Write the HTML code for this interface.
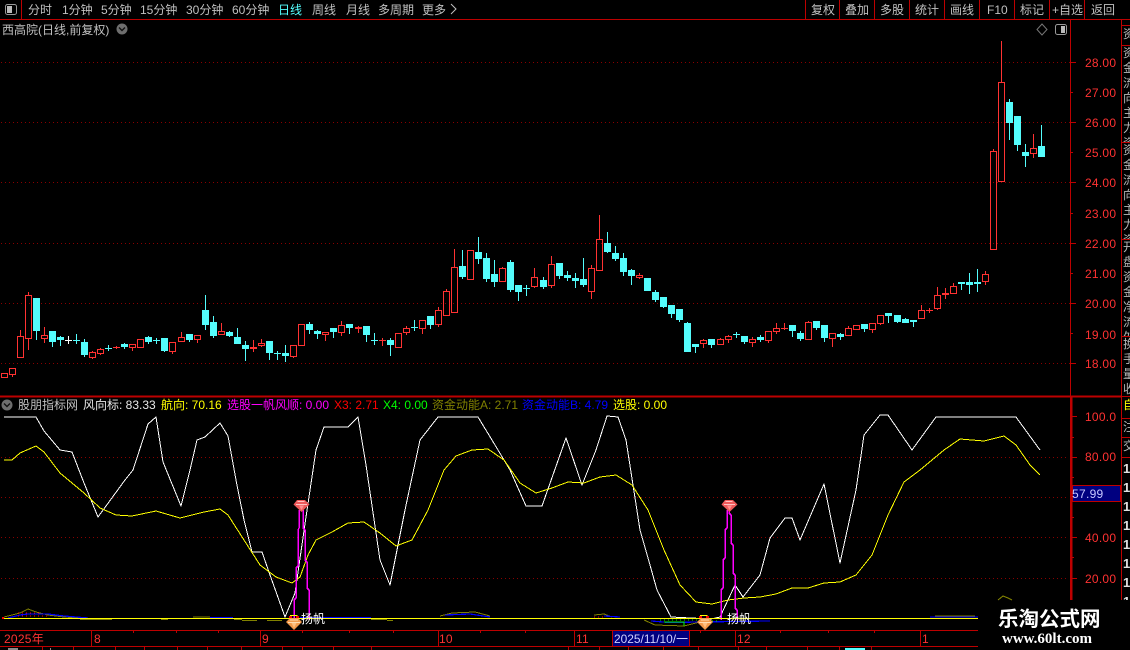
<!DOCTYPE html>
<html><head><meta charset="utf-8"><style>
html,body{margin:0;padding:0;background:#000;width:1130px;height:650px;overflow:hidden}
#w{position:relative;width:1130px;height:650px;background:#000;overflow:hidden;font-family:"Liberation Sans","WenQuanYi Zen Hei","Noto Sans CJK SC",sans-serif}
svg{position:absolute;left:0;top:0}
text{font-family:"Liberation Sans","WenQuanYi Zen Hei","Noto Sans CJK SC",sans-serif;font-size:12px}
.strip{position:absolute;left:1123px;width:7px;overflow:hidden;color:#b8b8b8;font-size:12px;line-height:15px}
.strip div{width:12px}
</style></head><body><div id="w">
<svg width="1130" height="650" viewBox="0 0 1130 650">
<g stroke="#8a0000" stroke-dasharray="1 3" stroke-width="1" shape-rendering="crispEdges">
<path d="M1 62.5H1070M1 122.5H1070M1 182.5H1070M1 243.5H1070M1 303.5H1070M1 363.5H1070M1 457.5H1068M1 497.5H1068M1 537.5H1068M1 578.5H1068"/>
</g>
<g fill="none" stroke-width="1" shape-rendering="crispEdges">
<path stroke="#ff3232" d="M1.5 373.5h6v4h-6zM9.5 368.5h6v6h-6zM12.5 375v2M17.5 336.5h6v21h-6zM20.5 330v6M25.5 295.5h6v43h-6zM28.5 292v3M28.5 339v11M41.5 335.5h6v3h-6zM44.5 327v8M44.5 339v4M89.5 352.5h6v5h-6zM92.5 351v1M92.5 358v1M97.5 349.5h6v4h-6zM100.5 348v1M100.5 354v1M113 347.5h7M116.5 346v3M129.5 344.5h6v3h-6zM132.5 348v3M137.5 339.5h6v8h-6zM169.5 342.5h6v9h-6zM172.5 352v2M178.5 337.5h6v4h-6zM181.5 332v5M194.5 335.5h6v4h-6zM197.5 340v3M218.5 331.5h6v3h-6zM221.5 323v8M250 347.5h7M250 348.5h7M253.5 340v12M258.5 343.5h6v2h-6zM261.5 339v4M261.5 346v1M290.5 345.5h6v11h-6zM293.5 357v1M298.5 324.5h6v21h-6zM322.5 332.5h6v2h-6zM325.5 335v6M338.5 325.5h6v7h-6zM341.5 321v4M341.5 333v3M355 327.5h7M355 328.5h7M358.5 326v7M379 340.5h7M382.5 338v8M395.5 333.5h6v14h-6zM403.5 328.5h6v4h-6zM406.5 326v2M406.5 333v2M419.5 320.5h6v8h-6zM422.5 329v5M435.5 310.5h6v14h-6zM438.5 307v3M438.5 325v2M443.5 291.5h6v24h-6zM446.5 289v2M451.5 267.5h6v45h-6zM454.5 249v18M467.5 250.5h6v29h-6zM499.5 268.5h6v13h-6zM502.5 267v1M531.5 277.5h6v9h-6zM534.5 268v9M534.5 287v1M548.5 264.5h6v21h-6zM551.5 256v8M551.5 286v2M588.5 268.5h6v23h-6zM591.5 265v3M591.5 292v7M596.5 239.5h6v31h-6zM599.5 215v24M636.5 275.5h6v2h-6zM639.5 273v2M639.5 278v1M700.5 340.5h6v3h-6zM703.5 339v1M703.5 344v4M717.5 339.5h6v5h-6zM720.5 338v1M725.5 336.5h6v3h-6zM728.5 335v1M728.5 340v3M749.5 339.5h6v3h-6zM752.5 337v2M752.5 343v4M765.5 331.5h6v9h-6zM768.5 341v2M773.5 328.5h6v3h-6zM776.5 323v5M776.5 332v2M781 328.5h7M784.5 323v7M805.5 322.5h6v17h-6zM808.5 321v1M829.5 333.5h6v5h-6zM832.5 339v8M845.5 328.5h6v7h-6zM848.5 326v2M853.5 325.5h6v4h-6zM869.5 323.5h6v6h-6zM872.5 330v3M877.5 315.5h6v8h-6zM880.5 324v1M918.5 310.5h6v8h-6zM921.5 305v5M926 310.5h7M929.5 308v5M934.5 295.5h6v13h-6zM937.5 287v8M937.5 309v1M942 293.5h7M942 294.5h7M945.5 288v11M950.5 286.5h6v7h-6zM953.5 283v3M982.5 274.5h6v7h-6zM985.5 271v3M985.5 282v3M990.5 151.5h6v98h-6zM993.5 149v2M998.5 82.5h6v99h-6zM1001.5 41v41M1030.5 148.5h6v5h-6zM1033.5 134v14M1033.5 154v4"/>
<path stroke="#54fcfc" fill="#54fcfc" d="M33.5 298.5h6v32h-6zM36.5 331v9M49.5 331.5h6v10h-6zM52.5 342v5M57.5 337.5h6v2h-6zM60.5 336v1M60.5 340v6M73 340.5h7M76.5 334v10M81.5 342.5h6v12h-6zM84.5 339v3M84.5 355v2M105 348.5h7M108.5 345v6M121.5 344.5h6v2h-6zM124.5 343v1M124.5 347v2M145.5 337.5h6v4h-6zM148.5 336v1M148.5 342v2M153 340.5h7M156.5 338v6M161.5 338.5h6v12h-6zM164.5 351v1M186.5 334.5h6v5h-6zM189.5 340v2M202.5 310.5h6v14h-6zM205.5 295v15M205.5 325v5M210.5 322.5h6v13h-6zM213.5 316v6M213.5 336v2M226.5 332.5h6v3h-6zM229.5 331v1M229.5 336v1M234.5 337.5h6v6h-6zM237.5 328v9M242.5 345.5h6v3h-6zM245.5 341v4M245.5 349v12M266.5 341.5h6v11h-6zM269.5 353v7M274 353.5h7M277.5 351v9M282.5 353.5h6v2h-6zM285.5 345v8M285.5 356v6M306.5 324.5h6v5h-6zM309.5 322v2M309.5 330v4M314.5 331.5h6v2h-6zM317.5 330v1M317.5 334v5M330.5 328.5h6v3h-6zM333.5 332v6M346.5 324.5h6v3h-6zM349.5 328v6M363.5 326.5h6v8h-6zM366.5 335v7M371 340.5h7M374.5 333v12M387.5 340.5h6v4h-6zM390.5 338v2M390.5 345v11M411 327.5h7M414.5 320v11M427.5 316.5h6v8h-6zM430.5 325v4M459.5 266.5h6v10h-6zM462.5 250v16M462.5 277v2M475.5 252.5h6v6h-6zM478.5 237v15M478.5 259v5M483.5 258.5h6v20h-6zM486.5 253v5M486.5 279v3M491.5 274.5h6v7h-6zM494.5 260v14M494.5 282v5M507.5 262.5h6v27h-6zM510.5 260v2M510.5 290v2M515.5 285.5h6v6h-6zM518.5 292v9M523 288.5h7M526.5 285v11M540.5 280.5h6v6h-6zM543.5 277v3M543.5 287v2M556.5 263.5h6v12h-6zM559.5 276v3M564.5 275.5h6v2h-6zM567.5 271v4M567.5 278v3M572.5 278.5h6v2h-6zM575.5 273v5M575.5 281v7M580.5 279.5h6v5h-6zM583.5 258v21M583.5 285v2M604.5 243.5h6v8h-6zM607.5 232v11M607.5 252v1M612.5 253.5h6v5h-6zM615.5 246v7M615.5 259v2M620.5 258.5h6v13h-6zM623.5 253v5M623.5 272v4M628.5 270.5h6v5h-6zM631.5 269v1M631.5 276v9M644.5 278.5h6v12h-6zM652.5 292.5h6v7h-6zM655.5 290v2M655.5 300v2M660.5 297.5h6v9h-6zM663.5 307v1M668.5 305.5h6v8h-6zM671.5 314v4M676.5 309.5h6v10h-6zM679.5 320v2M684.5 323.5h6v28h-6zM687.5 322v1M692.5 344.5h6v2h-6zM695.5 347v6M708.5 339.5h6v5h-6zM711.5 345v3M733 334.5h7M736.5 332v6M741.5 336.5h6v5h-6zM744.5 342v2M757.5 337.5h6v2h-6zM760.5 335v2M760.5 340v2M789.5 325.5h6v5h-6zM792.5 331v6M797.5 333.5h6v5h-6zM800.5 331v2M800.5 339v2M813.5 321.5h6v6h-6zM816.5 328v2M821.5 325.5h6v12h-6zM824.5 338v4M837.5 334.5h6v2h-6zM840.5 333v1M840.5 337v3M861.5 324.5h6v4h-6zM864.5 329v3M885.5 313.5h6v2h-6zM888.5 316v7M894.5 315.5h6v6h-6zM897.5 322v1M902.5 319.5h6v3h-6zM905.5 318v1M910.5 320.5h6v1h-6zM913.5 322v5M958.5 282.5h6v1h-6zM961.5 284v6M966.5 282.5h6v2h-6zM969.5 273v9M969.5 285v9M974.5 282.5h6v1h-6zM977.5 269v13M977.5 284v8M1006.5 102.5h6v20h-6zM1009.5 99v3M1009.5 123v17M1014.5 116.5h6v28h-6zM1017.5 145v6M1022.5 152.5h6v3h-6zM1025.5 144v8M1025.5 156v11M1038.5 146.5h6v10h-6zM1041.5 125v21"/>
<path stroke="#fff" d="M65 340.5h7M68.5 336v8"/>
</g>
<!-- indicator lines -->
<g fill="none" stroke-width="1" stroke-linejoin="round">
<path stroke="#808000" d="M4 617L20 613L28 609L36 612L48 615L64 617L80 618M80 619.5H112M161 619.5H168M193 617H210M234 619.5H242M242 620.5H257M267 620.5H282M371 619.5H387M387 620.5H393M440 616L452 613L475 612L490 616M594 615L604 614L612 617M644 620L655 625L684 626L700 622M935 616L975 616M998 600L1003 596L1008 598L1012 600" shape-rendering="crispEdges"/>
<path stroke="#0000ff" stroke-width="1.2" d="M8 618L20 615L28 614L48 614L64 616L88 618M210 617.5H233M300 617.5H371M445 615L470 614L490 617M604 616L620 617M651 621L669 622.5L700 622L770 621M930 617H978" shape-rendering="crispEdges"/>
<path stroke="#ff0000" stroke-dasharray="1 3" d="M18 616H50M18 613H40M594 617H604" shape-rendering="crispEdges"/>
<path stroke="#00ff00" stroke-dasharray="1 3" d="M660 620H700M700 621H720" shape-rendering="crispEdges"/>
<path stroke="#00ff00" d="M684 626V622H664" shape-rendering="crispEdges"/>
<path stroke="#fff" d="M4 417L36 417L44 431L60 450L72 452L84 483L98 517L125 480L133 470L148 424L156 417L163 462L181 506L190 470L197 440L205 437L220 423L228 436L236 480L244 520L252 552L262 552L270 575L285 617L295 593L306 517L316 450L324 427L348 427L358 417L366 465L380 560L390 585L405 510L420 440L438 417L478 417L495 445L510 470L526 506L542 506L566 438L582 485L596 450L607 416L618 417L626 440L640 530L650 565L657 590L671 617L711 619L720 617L735 585L743 597L760 575L770 538L785 518L792 518L800 540L824 484L840 563L856 490L864 435L880 415L888 415L912 450L936 417L1016 417L1040 450" shape-rendering="crispEdges"/>
<path stroke="#ffff00" d="M4 460L12 460L20 453L36 446L44 452L60 473L84 493L100 508L116 515L132 516L156 511L180 518L204 512L220 509L228 515L244 540L260 565L276 577L292 583L300 577L308 555L316 540L332 532L348 523L364 522L380 533L396 546L412 540L428 510L444 470L456 456L472 450L488 449L504 460L520 483L536 493L552 488L568 482L584 483L600 477L616 475L632 485L648 510L664 550L680 585L696 602L712 604L728 600L744 598L760 597L776 594L792 588L808 588L824 583L840 582L856 575L872 555L888 515L904 482L920 470L944 450L960 439L984 441L1004 436L1016 445L1030 465L1040 475" shape-rendering="crispEdges"/>
<path stroke="#ff00ff" stroke-width="1.5" d="M294 620V600L296 598V568L298 566V530L299 528V510M309 620V590L307 588V562L305 560V530L303 528V510M721 620V590L723 588V560L725 558V530L727 528V510M737 620V610L735 608V575L733 573V545L731 543V515L729 513V510" shape-rendering="crispEdges"/>
<path stroke="#ffff00" stroke-width="1" d="M4 618.5H978" shape-rendering="crispEdges"/>
</g>
<rect x="2" y="617" width="2" height="2" fill="#f00"/>
<!-- gems -->
<polygon points="297,500 305,500 309.5,504.5 301.5,512 293.5,504.5" fill="#ee5a5a"/><path d="M297.5 501.5h7M296 504.5h11" stroke="#ffc0c0" fill="none"/><polygon points="299,505.5 304,505.5 301.5,510" fill="#ff9090"/>
<polygon points="725,500 733,500 737.5,504.5 729.5,512 721.5,504.5" fill="#ee5a5a"/><path d="M725.5 501.5h7M724 504.5h11" stroke="#ffc0c0" fill="none"/><polygon points="727,505.5 732,505.5 729.5,510" fill="#ff9090"/>
<path d="M290 615.5h7v3" stroke="#ff0" fill="none"/><rect x="289" y="616" width="3" height="2" fill="#f00"/><rect x="296" y="616" width="3" height="2" fill="#f00"/>
<path d="M700 615.5h7v3" stroke="#ff0" fill="none"/><rect x="699" y="616" width="3" height="2" fill="#f00"/><rect x="706" y="616" width="3" height="2" fill="#f00"/>
<polygon points="290,618 298,618 302,622 294,630 286,622" fill="#f39a4a"/><path d="M290 620h8M288 622.5h12" stroke="#ffdcb0" fill="none"/><polygon points="291.5,623 296.5,623 294,628" fill="#ffc080"/>
<polygon points="701,618 709,618 713,622 705,630 697,622" fill="#f39a4a"/><path d="M701 620h8M699 622.5h12" stroke="#ffdcb0" fill="none"/><polygon points="702.5,623 707.5,623 705,628" fill="#ffc080"/>
<text x="301" y="623" fill="#fff">扬帆</text><text x="727" y="623" fill="#fff">扬帆</text>
<!-- frame -->
<g stroke="#bd0000" fill="none" shape-rendering="crispEdges">
<path d="M0 19.5H1130M21.5 0V19M805.5 0V19M839.5 0V19M874.5 0V19M909.5 0V19M944.5 0V19M979.5 0V19M1014.5 0V19M1049.5 0V19M1084.5 0V19"/>
<path d="M1070.5 20V600M1121.5 20V600M1122 25.5H1130M1122 45.5H1130M1122 142.5H1130M1122 239.5H1130M1122 336.5H1130M1122 396.5H1130M1122 418.5H1130M1122 437.5H1130M1122 457.5H1130"/>
<path stroke-width="2" d="M0 396.5H1121M1071.5 397V600"/>
<path d="M1070 62.5h6M1070 92.5h3M1070 122.5h6M1070 152.5h3M1070 182.5h6M1070 213.5h3M1070 243.5h6M1070 273.5h3M1070 303.5h6M1070 333.5h3M1070 363.5h6M1071 416.5h6M1071 437.5h3M1071 457.5h6M1071 477.5h3M1071 517.5h3M1071 537.5h6M1071 557.5h3M1071 578.5h6"/>
<path d="M0 630.5H978M0 646.5H978M91.5 630V646M260.5 630V646M438.5 630V646M574.5 630V646M735.5 630V646M920.5 630V646M133.5 630v3M176.5 630v3M218.5 630v3M302.5 630v3M349.5 630v3M393.5 630v3M480.5 630v3M525.5 630v3M700.5 630v3M780.5 630v3M828.5 630v3M874.5 630v3M42.5 646v4M73.5 646v4M115.5 646v4M144.5 646v4M177.5 646v4M207.5 646v4M241.5 646v4M282.5 646v4M302.5 646v4M333.5 646v4M371.5 646v4M568.5 646v4M599.5 646v4M628.5 646v4M663.5 646v4M698.5 646v4M738.5 646v4M766.5 646v4M807.5 646v4M839.5 646v4M871.5 646v4"/>
</g>
<rect x="1072.5" y="485.5" width="48" height="16" fill="#000080" stroke="#bd0000"/>
<text x="1072" y="498" fill="#c8c8ff" letter-spacing=".3">57.99</text>
<rect x="612.5" y="630.5" width="77" height="16" fill="#000080" stroke="#bd0000"/>
<text x="614" y="643" fill="#d0d0ff" textLength="74" lengthAdjust="spacingAndGlyphs">2025/11/10/一</text>
<!-- icons -->
<rect x="5.5" y="4.5" width="11" height="10" rx="2" fill="#000" stroke="#999"/><rect x="7" y="6" width="5" height="7" fill="#bbb"/>
<rect x="1055.5" y="24.5" width="11" height="10" rx="2" fill="#000" stroke="#999"/><rect x="1061" y="26" width="4" height="7" fill="#bbb"/>
<polygon points="1042,24 1047,29.5 1042,35 1037,29.5" fill="none" stroke="#777"/>
<circle cx="122" cy="29" r="5.5" fill="#6e6e6e"/><path d="M119 27.5l3 3 3-3" stroke="#111" stroke-width="1.4" fill="none"/>
<circle cx="7" cy="405" r="5.5" fill="#6e6e6e"/><path d="M4 403.5l3 3 3-3" stroke="#111" stroke-width="1.4" fill="none"/>
<path d="M451 4l5 5-5 5" stroke="#c0c0c0" fill="none"/>
<!-- top bar -->
<g fill="#c0c0c0">
<text x="28" y="14">分时</text><text x="62" y="14">1分钟</text><text x="101" y="14">5分钟</text><text x="140" y="14">15分钟</text><text x="186" y="14">30分钟</text><text x="232" y="14">60分钟</text>
<text x="278" y="14" fill="#55ffff">日线</text><text x="312" y="14">周线</text><text x="346" y="14">月线</text><text x="378" y="14">多周期</text><text x="422" y="14">更多</text>
<text x="811" y="14">复权</text><text x="845" y="14">叠加</text><text x="880" y="14">多股</text><text x="915" y="14">统计</text><text x="950" y="14">画线</text><text x="987" y="14">F10</text><text x="1020" y="14">标记</text><text x="1052" y="14">+自选</text><text x="1091" y="14">返回</text>
<text x="2" y="34">西高院(日线,前复权)</text>
</g>
<!-- axis labels -->
<g fill="#ff3232" letter-spacing=".25">
<text x="1085" y="67">28.00</text><text x="1085" y="97">27.00</text><text x="1085" y="127">26.00</text><text x="1085" y="157">25.00</text><text x="1085" y="187">24.00</text><text x="1085" y="218">23.00</text><text x="1085" y="248">22.00</text><text x="1085" y="278">21.00</text><text x="1085" y="308">20.00</text><text x="1085" y="339">19.00</text><text x="1085" y="368">18.00</text>
<text x="1085" y="421">100.0</text><text x="1085" y="461">80.00</text><text x="1085" y="542">40.00</text><text x="1085" y="583">20.00</text>
<text x="4" y="643">2025年</text><text x="94" y="643">8</text><text x="262" y="643">9</text><text x="439" y="643">10</text><text x="576" y="643">11</text><text x="737" y="643">12</text><text x="922" y="643">1</text>
</g>
<!-- legend -->
<text x="18" y="409" fill="#c0c0c0">股朋指标网</text>
<text x="83" y="409" fill="#e8e8e8">风向标: 83.33</text>
<text x="161" y="409" fill="#ffff00">航向: 70.16</text>
<text x="227" y="409" fill="#ff00ff">选股一帆风顺: 0.00</text>
<text x="334" y="409" fill="#ff0000">X3: 2.71</text>
<text x="383" y="409" fill="#00ff00">X4: 0.00</text>
<text x="432" y="409" fill="#808000">资金动能A: 2.71</text>
<text x="522" y="409" fill="#0000ff">资金动能B: 4.79</text>
<text x="613" y="409" fill="#ffff00">选股: 0.00</text>
<!-- status bar slivers -->
<path d="M8 648h10v2H8zM50 648h1v2h-1z" fill="#8a8a8a"/><path d="M845 648h20v2h-20z" fill="#55ffff"/>
<!-- watermark -->
<rect x="978" y="600" width="152" height="50" fill="#000"/>
<path d="M998 600l5-4 5 2 4 2" stroke="#808000" fill="none"/>
<text x="998" y="626" fill="#fff" style="font-size:20.5px;font-weight:bold;font-family:'Noto Sans CJK SC','WenQuanYi Zen Hei',sans-serif">乐淘公式网</text>
<text x="1002" y="643" fill="#fff" style="font-size:15px;font-weight:bold;font-family:'Liberation Serif',serif">www.60lt.com</text>
</svg>
<div class="strip" style="top:27px;height:18px"><div>资</div></div>
<div class="strip" style="top:46px;height:96px"><div>资金流向主力资</div></div>
<div class="strip" style="top:143px;height:96px"><div>资金流向主力资</div></div>
<div class="strip" style="top:240px;height:96px"><div>开盘资金净流外</div></div>
<div class="strip" style="top:337px;height:59px"><div>换手量收</div></div>
<div class="strip" style="top:398px;height:20px;color:#ffff00"><div>自</div></div>
<div class="strip" style="top:420px;height:17px"><div>注</div></div>
<div class="strip" style="top:439px;height:18px"><div>交</div></div>
<div style="position:absolute;left:1123px;top:459px;width:7px;height:141px;overflow:hidden;color:#e0e0e0;font-size:13px;font-weight:bold;line-height:19px">1<br>1<br>1<br>1<br>1<br>1<br>1<br>1</div>
</div></body></html>
